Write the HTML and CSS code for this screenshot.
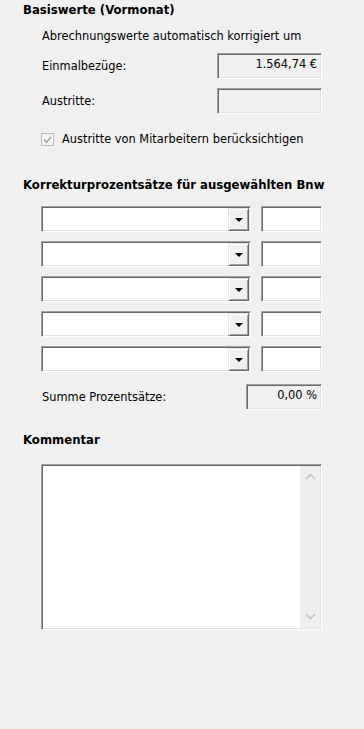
FILE: index.html
```html
<!DOCTYPE html>
<html lang="de">
<head>
  <meta charset="UTF-8" />
  <meta name="viewport" content="width=device-width, initial-scale=1" />
  <title>Basiswerte</title>
  <link rel="stylesheet" href="styles.css">
</head>
<body>
  <div class="panel">

    <!-- Basiswerte -->
    <h2 class="heading">Basiswerte (Vormonat)</h2>
    <div class="group">
      <p class="hint">Abrechnungswerte automatisch korrigiert um</p>

      <div class="field-row first">
        <span class="label">Einmalbezüge:</span>
        <div class="box readonly wide">1.564,74 €</div>
      </div>

      <div class="field-row">
        <span class="label">Austritte:</span>
        <div class="box readonly wide"></div>
      </div>

      <div class="check-row">
        <span class="check">
          <svg width="9" height="9" viewBox="0 0 9 9"><path d="M1 4.5 L3.5 7 L8 2" fill="none" stroke="#a0a0a0" stroke-width="1.6"/></svg>
        </span>
        <span class="label">Austritte von Mitarbeitern berücksichtigen</span>
      </div>
    </div>

    <!-- Korrekturprozentsätze -->
    <h2 class="heading second">Korrekturprozentsätze für ausgewählten Bnw</h2>
    <div class="group">
      <div class="combo-list">
        <div class="combo-row">
          <div class="combo"><span class="drop"><span class="arrow"></span></span></div>
          <div class="box pct"></div>
        </div>
        <div class="combo-row">
          <div class="combo"><span class="drop"><span class="arrow"></span></span></div>
          <div class="box pct"></div>
        </div>
        <div class="combo-row">
          <div class="combo"><span class="drop"><span class="arrow"></span></span></div>
          <div class="box pct"></div>
        </div>
        <div class="combo-row">
          <div class="combo"><span class="drop"><span class="arrow"></span></span></div>
          <div class="box pct"></div>
        </div>
        <div class="combo-row">
          <div class="combo"><span class="drop"><span class="arrow"></span></span></div>
          <div class="box pct"></div>
        </div>
      </div>

      <div class="field-row sum">
        <span class="label">Summe Prozentsätze:</span>
        <div class="box readonly sum-box">0,00 %</div>
      </div>
    </div>

    <!-- Kommentar -->
    <h2 class="heading third">Kommentar</h2>
    <div class="group">
      <div class="memo">
        <div class="memo-text"></div>
        <div class="scrollbar">
          <svg width="11" height="7" viewBox="0 0 11 7"><path d="M1 6 L5.5 1.5 L10 6" fill="none" stroke="#c4c4c4" stroke-width="1.6"/></svg>
          <svg width="11" height="7" viewBox="0 0 11 7"><path d="M1 1 L5.5 5.5 L10 1" fill="none" stroke="#c4c4c4" stroke-width="1.6"/></svg>
        </div>
      </div>
    </div>

  </div>
</body>
</html>
```

FILE: styles.css
```css
body {
  margin: 0;
  background-color: #f0f0f0;
  color: #000;
  font-family: "DejaVu Sans", Verdana, sans-serif;
  font-size: 11.4px;
}

/* outer container */
.panel {
  width: 299px;
  padding: 3px 42px 0 23px;
}

/* section headings */
.heading {
  margin: 0;
  font-size: 11.7px;
  font-weight: bold;
  line-height: 14px;
  white-space: nowrap;
}
.heading.second {
  margin-top: 32px;
}
.heading.third {
  margin-top: 23px;
}

.group {
  padding-left: 18px;
}

.hint {
  margin: 12px 0 0 1px;
  line-height: 14px;
}

.label {
  line-height: 14px;
}

/* label + box line */
.field-row {
  display: flex;
  justify-content: space-between;
  align-items: center;
  margin-top: 9px;
  padding-left: 1px;
}
.field-row.first {
  margin-top: 10px;
}
.field-row.sum {
  margin-top: 12px;
}

/* sunken box */
.box {
  box-sizing: border-box;
  height: 26px;
  border: 1px solid;
  border-color: #a0a0a0 #fff #fff #a0a0a0;
  box-shadow: inset 1px 1px 0 #696969, inset -1px -1px 0 #e3e3e3;
  background-color: #fff;
  text-align: right;
  padding: 3px 4px 0 0;
  line-height: 14px;
}
.box.readonly {
  background-color: #f0f0f0;
}
.box.wide {
  width: 105px;
}
.box.sum-box {
  width: 76px;
}
.box.pct {
  width: 61px;
}

/* disabled checkbox */
.check-row {
  display: flex;
  align-items: center;
  gap: 8px;
  margin-top: 18px;
}
.check {
  box-sizing: border-box;
  width: 13px;
  height: 13px;
  border: 1px solid #bcbcbc;
  background-color: #f4f4f4;
  display: flex;
  align-items: center;
  justify-content: center;
}

/* combo rows */
.combo-list {
  display: flex;
  flex-direction: column;
  gap: 9px;
  margin-top: 14px;
}
.combo-row {
  display: flex;
  justify-content: space-between;
}
.combo {
  box-sizing: border-box;
  width: 210px;
  height: 26px;
  border: 1px solid;
  border-color: #a0a0a0 #fff #fff #a0a0a0;
  box-shadow: inset 1px 1px 0 #696969, inset -1px -1px 0 #e3e3e3;
  background-color: #fff;
  display: flex;
  justify-content: flex-end;
  padding: 1px 1px 1px 0;
}
.drop {
  box-sizing: border-box;
  width: 21px;
  height: 23px;
  background-color: #f0f0f0;
  border: 1px solid;
  border-color: #e3e3e3 #696969 #696969 #e3e3e3;
  box-shadow: inset 1px 1px 0 #fff, inset -1px -1px 0 #a0a0a0;
  display: flex;
  align-items: center;
  justify-content: center;
}
.arrow {
  width: 0;
  height: 0;
  border-left: 4px solid transparent;
  border-right: 4px solid transparent;
  border-top: 4px solid #000;
  margin-top: 1px;
}

/* comment memo */
.memo {
  box-sizing: border-box;
  margin-top: 17px;
  height: 166px;
  display: flex;
  border: 1px solid;
  border-color: #a0a0a0 #fff #fff #a0a0a0;
  box-shadow: inset 1px 1px 0 #696969, inset -1px -1px 0 #e3e3e3;
  background-color: #fff;
  padding: 1px;
}
.memo-text {
  flex: 1;
}
.scrollbar {
  width: 20px;
  background-color: #eeeeee;
  display: flex;
  flex-direction: column;
  justify-content: space-between;
  align-items: center;
  padding: 7px 0 8px;
}
```
